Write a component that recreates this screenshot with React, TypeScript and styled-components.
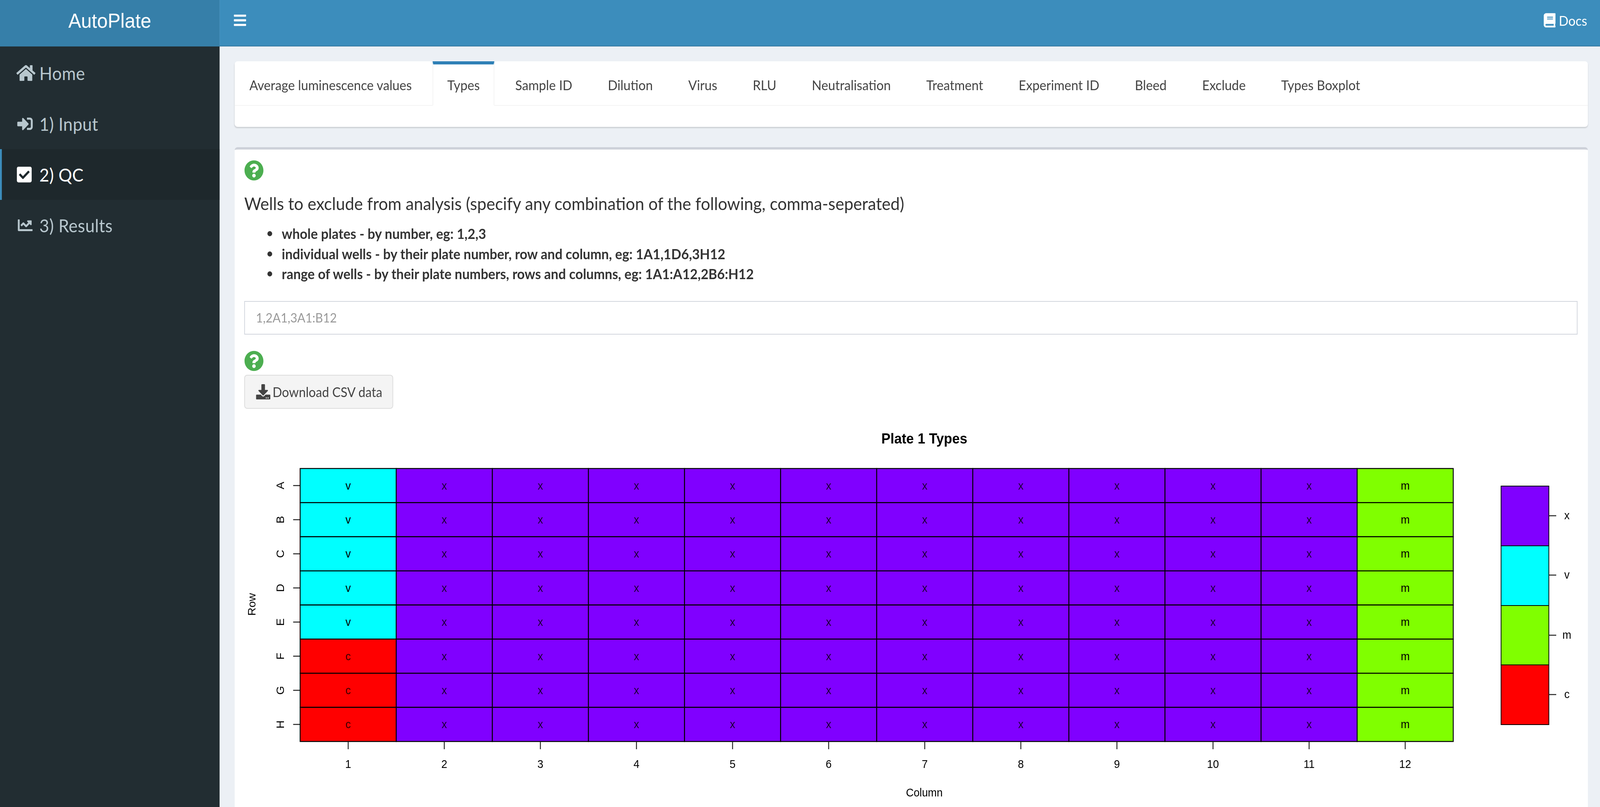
// AutoPlate QC page: Types tab with the plate heatmap

import React, { useLayoutEffect, useState } from 'react';
import styled, { createGlobalStyle } from 'styled-components';
import {
  FaBars,
  FaBook,
  FaChartLine,
  FaCheckSquare,
  FaDownload,
  FaHome,
  FaQuestionCircle,
  FaSignInAlt,
} from 'react-icons/fa';

const GlobalStyle = createGlobalStyle`
  html, body {
    margin: 0;
    height: 100%;
    overflow: hidden;
    background: #ecf0f5;
  }
  * {
    box-sizing: border-box;
  }
`;

const bodyFont = `Lato, 'Open Sans', sans-serif`;

const PAGE_W = 4350;
const PAGE_H = 2067;

const Page = styled.div`
  display: flex;
  width: ${PAGE_W}px;
  height: ${PAGE_H}px;
  overflow: hidden;
  transform-origin: 0 0;
  font-family: ${bodyFont};
  color: #333;
`;

const Sidebar = styled.aside`
  flex: 0 0 597px;
  background: #222d32;
`;

const Logo = styled.div`
  height: 119px;
  display: flex;
  align-items: center;
  justify-content: center;
  padding-bottom: 13px;
  background: #367fa9;
  color: #fff;
  font-family: 'Liberation Sans', Arial, sans-serif;
  font-size: 52px;
`;

const Menu = styled.nav`
  padding-top: 3px;
`;

const MenuItem = styled.a<{ $active?: boolean }>`
  height: 130px;
  display: flex;
  align-items: center;
  padding-left: ${props => (props.$active ? '38px' : '43px')};
  border-left: ${props => (props.$active ? '5px solid #3c8dbc' : 'none')};
  background: ${props => (props.$active ? '#1e282c' : 'transparent')};
  color: ${props => (props.$active ? '#fff' : '#b8c7ce')};
  font-size: 46px;
  letter-spacing: 0.4px;
`;

const MenuIcon = styled.span<{ $w: number; $h: number }>`
  flex: 0 0 64px;
  display: flex;
  svg {
    width: ${props => props.$w}px;
    height: ${props => props.$h}px;
  }
`;

const Main = styled.main`
  flex: 1;
  min-width: 0;
`;

const Navbar = styled.header`
  height: 119px;
  display: flex;
  align-items: center;
  justify-content: space-between;
  padding: 0 35px 13px 38px;
  background: #3c8dbc;
  border-bottom: 2px solid #35799f;
  color: #fff;
`;

const Burger = styled(FaBars)`
  width: 35px;
  height: 38px;
`;

const DocsLink = styled.a`
  display: flex;
  align-items: center;
  gap: 9px;
  font-size: 34.5px;
  svg {
    width: 32px;
    height: 38px;
  }
`;

const Content = styled.div`
  padding: 38px 33px 0 41px;
`;

const TabsBox = styled.section`
  height: 168px;
  margin-bottom: 52px;
  background: #fff;
  border-radius: 8px;
  box-shadow: 0 3px 3px rgba(0, 0, 0, 0.14);
`;

const TabRow = styled.div`
  height: 114px;
  display: flex;
  border-bottom: 2px solid #f4f4f4;
`;

const Tab = styled.a<{ $active?: boolean }>`
  height: 114px;
  display: flex;
  align-items: center;
  margin-right: 16.5px;
  padding: 0 ${props => (props.$active ? '38px' : '40px')};
  border-top: 8px solid ${props => (props.$active ? '#2e80b6' : 'transparent')};
  border-left: ${props => (props.$active ? '2px solid #f4f4f4' : 'none')};
  border-right: ${props => (props.$active ? '2px solid #f4f4f4' : 'none')};
  border-bottom: 2px solid ${props => (props.$active ? '#fff' : 'transparent')};
  color: #444;
  font-size: 34.7px;
  white-space: nowrap;
`;

const QcBox = styled.section`
  padding: 27px 28px 0 26px;
  background: #fff;
  border-top: 6px solid #cdd1d9;
  border-radius: 8px 8px 0 0;
`;

const HelpIcon = styled(FaQuestionCircle)`
  display: block;
  width: 53px;
  height: 53px;
  color: #4cae50;
`;

const Heading = styled.h3`
  margin: 28px 0 0;
  height: 60px;
  line-height: 60px;
  font-size: 44.8px;
  font-weight: 400;
  color: #333;
`;

const WellRules = styled.ul`
  margin: 22px 0 0;
  padding-left: 63px;
  list-style: none;
`;

const WellRule = styled.li`
  display: flex;
  align-items: center;
  height: 51.5px;
  line-height: 51.5px;
  font-size: 36px;
  font-weight: 700;
  &::before {
    content: '';
    flex: 0 0 13px;
    height: 13px;
    margin-right: 26px;
    border-radius: 50%;
    background: #333;
  }
`;

const WellsInput = styled.input`
  display: block;
  width: 100%;
  height: 86px;
  margin-top: 43px;
  padding: 0 30px;
  background: #fff;
  border: 2px solid #d2d6de;
  border-radius: 0;
  font-family: ${bodyFont};
  font-size: 32.5px;
  outline: none;
  &::placeholder {
    color: #999;
    opacity: 1;
  }
`;

const SecondHelp = styled.div`
  margin: 41px 0 9px;
`;

const DownloadButton = styled.button`
  display: flex;
  align-items: center;
  gap: 6px;
  width: 405px;
  height: 87px;
  padding: 0 0 0 30px;
  background: #f4f4f4;
  border: 2px solid #ddd;
  border-radius: 8px;
  color: #444;
  font-family: ${bodyFont};
  font-size: 34px;
  svg {
    width: 39px;
    height: 39px;
  }
`;

const PlotFrame = styled.svg`
  display: block;
  width: 3625px;
  height: 1007px;
  margin-top: 13px;
`;

const PlotTitle = styled.text`
  font-family: 'Liberation Sans', Arial, sans-serif;
  font-size: 37px;
  font-weight: 700;
  text-anchor: middle;
`;

const PlotLabel = styled.text`
  font-family: 'Liberation Sans', Arial, sans-serif;
  font-size: 29px;
  text-anchor: middle;
  fill: #000;
`;

const TAB_NAMES = [
  'Average luminescence values',
  'Types',
  'Sample ID',
  'Dilution',
  'Virus',
  'RLU',
  'Neutralisation',
  'Treatment',
  'Experiment ID',
  'Bleed',
  'Exclude',
  'Types Boxplot',
];

const FILLS: Record<string, string> = {
  x: '#8000ff',
  v: '#00ffff',
  m: '#80ff00',
  c: '#ff0000',
};

const ROWS = ['A', 'B', 'C', 'D', 'E', 'F', 'G', 'H'];
const COLUMNS = [1, 2, 3, 4, 5, 6, 7, 8, 9, 10, 11, 12];

// plot coordinates are page pixels, the viewBox does the offset
const GRID_LEFT = 816;
const GRID_TOP = 1200;
const CELL_W = 261.25;
const CELL_H = 87.4;

const LEGEND = [
  { key: 'x', top: 1245, bottom: 1398, tick: 1321 },
  { key: 'v', top: 1398, bottom: 1551, tick: 1473 },
  { key: 'm', top: 1551, bottom: 1703, tick: 1627 },
  { key: 'c', top: 1703, bottom: 1856, tick: 1779 },
];

const wellType = (row: number, col: number) => {
  if (col === 12) return 'm';
  if (col > 1) return 'x';
  return row < 5 ? 'v' : 'c';
};

const PlateHeatmap: React.FC = () => {
  const gridBottom = GRID_TOP + CELL_H * 8;

  return (
    <PlotFrame viewBox="664 1060 3625 1007">
      <PlotTitle x={2513} y={1136}>Plate 1 Types</PlotTitle>

      {ROWS.map((letter, r) => {
        const cy = GRID_TOP + CELL_H * (r + 0.5);
        return (
          <g key={letter}>
            <line x1={797} x2={GRID_LEFT} y1={cy} y2={cy} stroke="#222" strokeWidth={2.5} />
            <PlotLabel transform={`translate(772 ${cy}) rotate(-90)`}>{letter}</PlotLabel>
            {COLUMNS.map(col => {
              const type = wellType(r, col);
              const x = GRID_LEFT + CELL_W * (col - 1);
              return (
                <g key={col}>
                  <rect
                    x={x}
                    y={GRID_TOP + CELL_H * r}
                    width={CELL_W}
                    height={CELL_H}
                    fill={FILLS[type]}
                    stroke="#000"
                    strokeWidth={2.5}
                  />
                  <PlotLabel x={x + CELL_W / 2} y={cy + 10} opacity={type === 'x' || type === 'c' ? 0.8 : 1}>
                    {type}
                  </PlotLabel>
                </g>
              );
            })}
          </g>
        );
      })}

      {COLUMNS.map(col => {
        const cx = GRID_LEFT + CELL_W * (col - 0.5);
        return (
          <g key={col}>
            <line x1={cx} x2={cx} y1={gridBottom} y2={1919} stroke="#222" strokeWidth={2.5} />
            <PlotLabel x={cx} y={1967}>{col}</PlotLabel>
          </g>
        );
      })}

      <PlotLabel x={2513} y={2040}>Column</PlotLabel>
      <PlotLabel transform="translate(695 1548) rotate(-90)">Row</PlotLabel>

      {LEGEND.map(item => (
        <g key={item.key}>
          <rect
            x={4081}
            y={item.top}
            width={130}
            height={item.bottom - item.top}
            fill={FILLS[item.key]}
            stroke="#000"
            strokeWidth={2}
          />
          <line x1={4211} x2={4231} y1={item.tick} y2={item.tick} stroke="#222" strokeWidth={2.5} />
          <PlotLabel x={4260} y={item.tick + 9}>{item.key}</PlotLabel>
        </g>
      ))}
    </PlotFrame>
  );
};

const App: React.FC = () => {
  // the window can come up narrower than the page was laid out for
  const [fit, setFit] = useState('none');

  useLayoutEffect(() => {
    setFit(`scale(${window.innerWidth / PAGE_W}, ${window.innerHeight / PAGE_H})`);
  }, []);

  return (
    <>
      <GlobalStyle />
      <Page style={{ transform: fit }}>
        <Sidebar>
          <Logo>AutoPlate</Logo>
          <Menu>
            <MenuItem>
              <MenuIcon $w={55} $h={46}><FaHome /></MenuIcon>
              Home
            </MenuItem>
            <MenuItem>
              <MenuIcon $w={50} $h={42}><FaSignInAlt /></MenuIcon>
              1) Input
            </MenuItem>
            <MenuItem $active>
              <MenuIcon $w={46} $h={46}><FaCheckSquare /></MenuIcon>
              2) QC
            </MenuItem>
            <MenuItem>
              <MenuIcon $w={51} $h={40}><FaChartLine /></MenuIcon>
              3) Results
            </MenuItem>
          </Menu>
        </Sidebar>
        <Main>
          <Navbar>
            <Burger />
            <DocsLink>
              <FaBook />
              Docs
            </DocsLink>
          </Navbar>
          <Content>
            <TabsBox>
              <TabRow>
                {TAB_NAMES.map(name => (
                  <Tab key={name} $active={name === 'Types'}>{name}</Tab>
                ))}
              </TabRow>
            </TabsBox>
            <QcBox>
              <HelpIcon />
              <Heading>
                Wells to exclude from analysis (specify any combination of the following, comma-seperated)
              </Heading>
              <WellRules>
                <WellRule>whole plates - by number, eg: 1,2,3</WellRule>
                <WellRule>individual wells - by their plate number, row and column, eg: 1A1,1D6,3H12</WellRule>
                <WellRule>range of wells - by their plate numbers, rows and columns, eg: 1A1:A12,2B6:H12</WellRule>
              </WellRules>
              <WellsInput placeholder="1,2A1,3A1:B12" />
              <SecondHelp>
                <HelpIcon />
              </SecondHelp>
              <DownloadButton>
                <FaDownload />
                Download CSV data
              </DownloadButton>
              <PlateHeatmap />
            </QcBox>
          </Content>
        </Main>
      </Page>
    </>
  );
};

export default App;
